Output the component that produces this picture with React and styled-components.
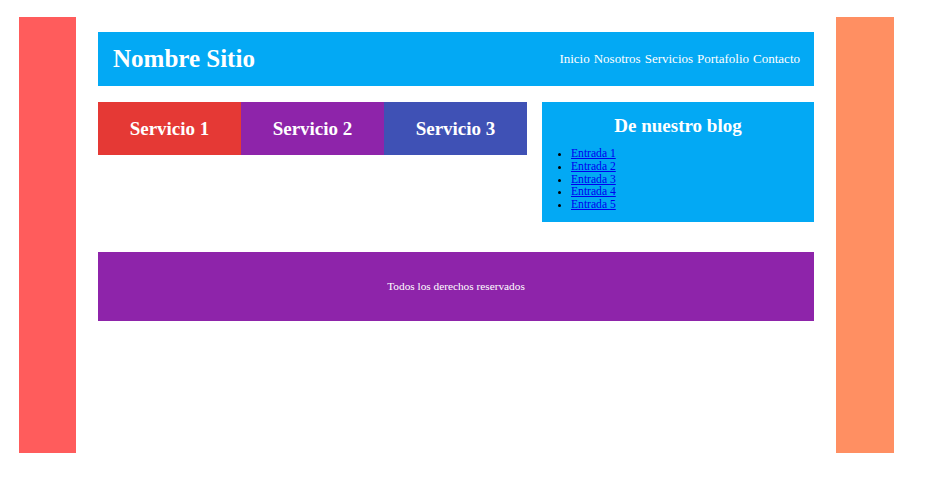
import styled, { createGlobalStyle } from "styled-components";

const GlobalStyle = createGlobalStyle`
  body {
    margin: 0;
    background: #ffffff;
    font-family: "Liberation Serif", "Times New Roman", serif;
  }
`;

const Page = styled.div`
  display: grid;
  grid-template-columns: 57px 760px 58px;
  height: 436px;
  margin: 17px 0 0 19px;
`;

const SideBar = styled.div`
  background: ${({ $color }) => $color};
`;

const Main = styled.div`
  display: flex;
  flex-direction: column;
  padding: 15px 22px 0;
  background: #ffffff;
`;

const Header = styled.header`
  display: flex;
  align-items: center;
  justify-content: space-between;
  height: 54px;
  padding: 0 14px 0 15px;
  background: #03a9f4;
  color: #ffffff;
`;

const SiteName = styled.h1`
  margin: 0;
  font-size: 25px;
  font-weight: bold;
`;

const Nav = styled.nav`
  display: flex;
  gap: 4px;
  font-size: 13px;
`;

const Content = styled.div`
  display: flex;
  align-items: flex-start;
  gap: 15px;
  margin-top: 16px;
`;

const Services = styled.div`
  display: grid;
  grid-template-columns: repeat(3, 1fr);
  width: 429px;
  height: 53px;
`;

const Service = styled.div`
  display: flex;
  align-items: center;
  justify-content: center;
  background: ${({ $color }) => $color};
  color: #ffffff;
  font-size: 19px;
  font-weight: bold;
`;

const Blog = styled.aside`
  flex: 1;
  padding: 12px 0 10px;
  background: #03a9f4;
`;

const BlogTitle = styled.h2`
  margin: 0 0 10px;
  text-align: center;
  color: #ffffff;
  font-size: 19px;
  line-height: 24px;
`;

const EntryList = styled.ul`
  margin: 0;
  padding-left: 29px;
  font-size: 11.6px;
  line-height: 12.75px;
`;

const EntryLink = styled.a`
  color: #0000ee;
`;

const Footer = styled.footer`
  display: flex;
  align-items: center;
  justify-content: center;
  height: 69px;
  margin-top: 30px;
  background: #8e24aa;
  color: #ffffff;
  font-size: 11.3px;
`;

const links = ["Inicio", "Nosotros", "Servicios", "Portafolio", "Contacto"];
const services = [
  { name: "Servicio 1", color: "#e53935" },
  { name: "Servicio 2", color: "#8e24aa" },
  { name: "Servicio 3", color: "#3f51b5" },
];
const entries = [1, 2, 3, 4, 5];

export default function App() {
  return (
    <>
      <GlobalStyle />
      <Page>
        <SideBar $color="#ff5c5c" />
        <Main>
          <Header>
            <SiteName>Nombre Sitio</SiteName>
            <Nav>
              {links.map((l) => (
                <span key={l}>{l}</span>
              ))}
            </Nav>
          </Header>
          <Content>
            <Services>
              {services.map((s) => (
                <Service key={s.name} $color={s.color}>
                  {s.name}
                </Service>
              ))}
            </Services>
            <Blog>
              <BlogTitle>De nuestro blog</BlogTitle>
              <EntryList>
                {entries.map((n) => (
                  <li key={n}>
                    <EntryLink href="#">Entrada {n}</EntryLink>
                  </li>
                ))}
              </EntryList>
            </Blog>
          </Content>
          <Footer>Todos los derechos reservados</Footer>
        </Main>
        <SideBar $color="#ff8f62" />
      </Page>
    </>
  );
}
